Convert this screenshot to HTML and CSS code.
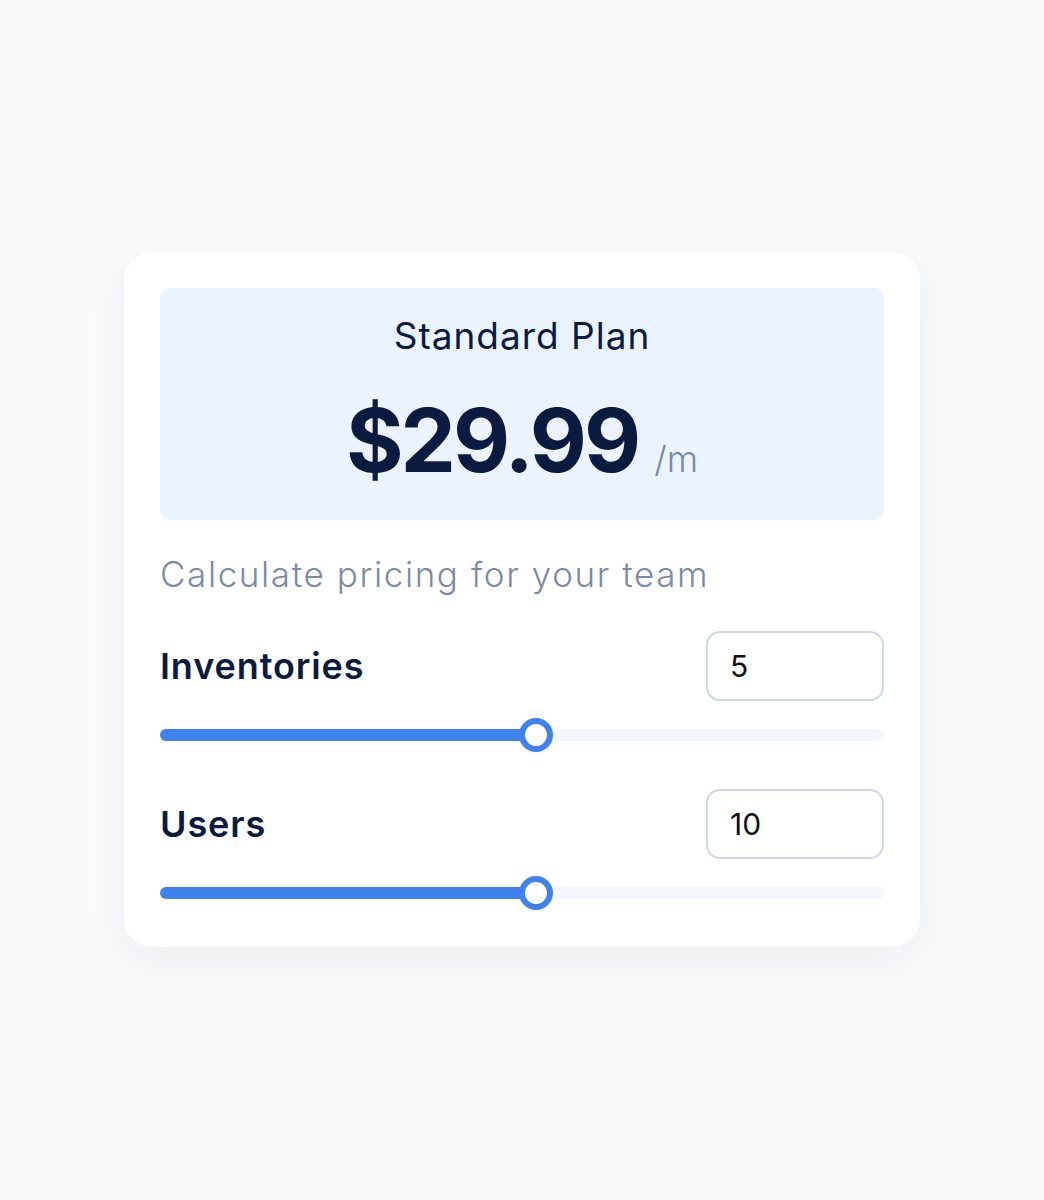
FILE: index.html
```html
<!DOCTYPE html>
<html lang="en">
<head>
<meta charset="utf-8">
<title>Pricing calculator</title>
<link rel="stylesheet" href="styles.css">
</head>
<body>
<main class="page">
  <section class="card">
    <div class="plan">
      <div class="plan-name">Standard Plan</div>
      <div class="price-line">
        <span class="price">$29.99</span>
        <span class="period">/m</span>
      </div>
    </div>
    <p class="subtitle">Calculate pricing for your team</p>
    <div class="field">
      <div class="field-row">
        <label class="field-label" for="inv">Inventories</label>
        <input class="field-input" id="inv" type="text" value="5">
      </div>
      <div class="slider">
        <div class="track"></div>
        <div class="fill" style="width: 52%"></div>
        <div class="thumb" style="left: 52%"></div>
      </div>
    </div>
    <div class="field">
      <div class="field-row">
        <label class="field-label" for="usr">Users</label>
        <input class="field-input" id="usr" type="text" value="10">
      </div>
      <div class="slider">
        <div class="track"></div>
        <div class="fill" style="width: 52%"></div>
        <div class="thumb" style="left: 52%"></div>
      </div>
    </div>
  </section>
</main>
</body>
</html>
```

FILE: styles.css
```css
* { box-sizing: border-box; }

html, body {
  margin: 0;
  padding: 0;
}

body {
  background: #f8fafc;
  font-family: Inter, "Noto Sans", "DejaVu Sans", sans-serif;
  color: #0b1b3f;
}

.page {
  min-height: 1200px;
  padding-bottom: 1px;
  display: flex;
  align-items: center;
  justify-content: center;
}

.card {
  width: 796px;
  background: #ffffff;
  border-radius: 28px;
  padding: 36px 36px 37px;
  box-shadow: 0 12px 40px rgba(30, 41, 59, 0.06);
}

.plan {
  background: #ebf3fe;
  border-radius: 10px;
  height: 232px;
  padding: 26px 0 30px;
  text-align: center;
}

.plan-name {
  font-size: 37px;
  line-height: 44px;
  font-weight: 400;
  letter-spacing: 1px;
  color: #0b1b3f;
}

.price-line {
  margin-top: 32px;
  height: 100px;
  display: flex;
  justify-content: center;
  align-items: baseline;
}

.price {
  font-size: 88px;
  line-height: 100px;
  font-weight: 700;
  letter-spacing: -3px;
  color: #0b1b3f;
}

.period {
  margin-left: 16px;
  font-size: 36px;
  font-weight: 300;
  color: #7a8aa5;
}

.subtitle {
  margin: 34px 0 0;
  font-size: 35px;
  line-height: 40px;
  font-weight: 300;
  letter-spacing: 1.6px;
  color: #7b8ba5;
}

.field { margin-top: 37px; }
.field + .field { margin-top: 37px; }

.field-row {
  display: flex;
  justify-content: space-between;
  align-items: center;
}

.field-label {
  font-size: 36px;
  font-weight: 600;
  letter-spacing: 0.9px;
  color: #0b1b3f;
}

.field-input {
  width: 178px;
  height: 70px;
  border: 2px solid #cfd8e3;
  border-radius: 14px;
  padding: 0 0 0 22px;
  font-family: inherit;
  font-size: 30px;
  color: #111111;
  background: #ffffff;
  outline: none;
}

.slider {
  position: relative;
  height: 34px;
  margin-top: 17px;
}

.track {
  position: absolute;
  left: 0;
  right: 0;
  top: 11px;
  height: 12px;
  border-radius: 6px;
  background: #f3f7fc;
}

.fill {
  position: absolute;
  left: 0;
  top: 11px;
  height: 12px;
  border-radius: 6px;
  background: #3f82ef;
}

.thumb {
  position: absolute;
  top: 0;
  width: 34px;
  height: 34px;
  margin-left: -17px;
  border-radius: 50%;
  background: #ffffff;
  border: 6px solid #3f82ef;
}
```
